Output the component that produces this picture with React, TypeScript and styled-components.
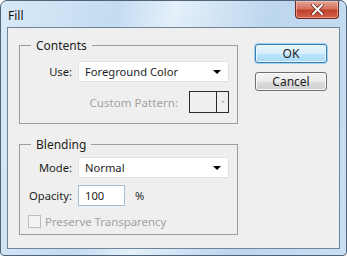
import React from 'react'
import styled, { createGlobalStyle } from 'styled-components'

const GlobalStyle = createGlobalStyle`
  html, body {
    margin: 0;
    padding: 0;
    background: #ffffff;
  }
  body {
    font-family: 'Noto Sans', 'Open Sans', sans-serif;
    font-size: 11.2px;
    color: #1e1e1e;
  }
`

const Window = styled.div`
  box-sizing: border-box;
  width: 347px;
  height: 256px;
  display: flex;
  flex-direction: column;
  padding: 0 6px 6px 6px;
  border: 1px solid #4f6479;
  border-radius: 7px 7px 4px 4px;
  background: linear-gradient(100deg, #d8e9f7 0%, #c4dcf1 30%, #e4f0fa 45%, #bcd6ee 70%, #c9dff3 100%);
`

const TitleBar = styled.div`
  height: 26px;
  display: flex;
  align-items: flex-start;
  justify-content: space-between;
`

const Title = styled.span`
  padding: 6px 0 0 1px;
  font-size: 12px;
  color: #111;
`

const CloseButton = styled.div`
  width: 42px;
  height: 17px;
  margin-right: 1px;
  display: flex;
  align-items: center;
  justify-content: center;
  border: 1px solid #6e2a22;
  border-top: none;
  border-radius: 0 0 4px 4px;
  background: linear-gradient(#e3a597 0%, #d5735f 45%, #c1412a 55%, #d2634a 100%);
  box-shadow: inset 0 0 0 1px rgba(255, 210, 200, 0.5);
`

const Client = styled.div`
  flex: 1;
  display: flex;
  gap: 17px;
  padding: 10px 12px 0 11px;
  border: 1px solid #6f8499;
  background: #efefef;
`

const Groups = styled.div`
  width: 219px;
  display: flex;
  flex-direction: column;
  gap: 13px;
`

const Group = styled.fieldset<{ $pad: string }>`
  margin: 0;
  padding: ${(p) => p.$pad};
  border: 1px solid #9d9d9d;
  display: flex;
  flex-direction: column;
`

const Legend = styled.legend`
  margin-left: 11px;
  padding: 0 5px;
  line-height: 15px;
  font-size: 12px;
`

const Row = styled.div<{ $mt?: number }>`
  display: grid;
  grid-template-columns: 52px 151px;
  column-gap: 6px;
  align-items: center;
  margin-top: ${(p) => p.$mt ?? 0}px;
`

const Label = styled.span`
  text-align: right;
  white-space: nowrap;
`

const Select = styled.div`
  box-sizing: border-box;
  height: 21px;
  display: flex;
  align-items: center;
  justify-content: space-between;
  padding: 0 7px 0 6px;
  background: #ffffff;
  border: 1px solid #e2e2e2;
`

const Arrow = styled.span<{ $color?: string; $size?: number }>`
  width: 0;
  height: 0;
  border-left: ${(p) => p.$size ?? 4}px solid transparent;
  border-right: ${(p) => p.$size ?? 4}px solid transparent;
  border-top: ${(p) => p.$size ?? 4}px solid ${(p) => p.$color ?? '#000'};
`

const PatternRow = styled.div`
  display: flex;
  justify-content: flex-end;
  align-items: center;
  gap: 11px;
  margin: 9px 8px 0 0;
  color: #a3a3a3;
  font-size: 11.6px;
`

const PatternBox = styled.div`
  box-sizing: border-box;
  width: 40px;
  height: 22px;
  display: flex;
  border: 1px solid #2b2b2b;
`

const Swatch = styled.div`
  flex: 1;
  border-right: 1px solid #2b2b2b;
`

const PatternArrow = styled.div`
  width: 11px;
  display: flex;
  align-items: center;
  justify-content: center;
`

const Input = styled.div`
  box-sizing: border-box;
  width: 47px;
  height: 21px;
  display: flex;
  align-items: center;
  padding-left: 6px;
  background: #ffffff;
  border: 1px solid #a7bdd3;
`

const InputRow = styled.div`
  display: flex;
  align-items: center;
  gap: 10px;
`

const CheckRow = styled.div`
  display: flex;
  align-items: center;
  gap: 4px;
  margin: 8px 0 0 8px;
  color: #a3a3a3;
  font-size: 11.4px;
`

const Checkbox = styled.span`
  box-sizing: border-box;
  width: 13px;
  height: 13px;
  border: 1px solid #bdbdbd;
  background: #f3f3f3;
`

const Buttons = styled.div`
  width: 72px;
  display: flex;
  flex-direction: column;
  gap: 9px;
  padding-top: 6px;
`

const Button = styled.button<{ $primary?: boolean }>`
  box-sizing: border-box;
  height: 19px;
  padding: 0;
  font-family: inherit;
  font-size: 12px;
  color: #1e1e1e;
  border-radius: 3px;
  border: 1px solid ${(p) => (p.$primary ? '#3d7bad' : '#707070')};
  background: ${(p) =>
    p.$primary
      ? 'linear-gradient(#e9f6fd 0%, #d6eefb 50%, #bee6fd 51%, #a7d9f5 100%)'
      : 'linear-gradient(#f2f2f2 0%, #ebebeb 50%, #dddddd 51%, #cfcfcf 100%)'};
  box-shadow: ${(p) => (p.$primary ? '0 0 0 1px #9fd3f3, inset 0 0 0 1px #e8f6fe' : 'inset 0 0 0 1px #fbfbfb')};
`

export default function App() {
  return (
    <>
      <GlobalStyle />
      <Window>
        <TitleBar>
          <Title>Fill</Title>
          <CloseButton>
            <svg width="13" height="11" viewBox="0 0 13 11">
              <path d="M2 1 L11 10 M11 1 L2 10" stroke="#5b1f16" strokeWidth="3.4" strokeLinecap="round" />
              <path d="M2 1 L11 10 M11 1 L2 10" stroke="#ffffff" strokeWidth="2" strokeLinecap="round" />
            </svg>
          </CloseButton>
        </TitleBar>
        <Client>
          <Groups>
            <Group $pad="8px 0 10px 0">
              <Legend>Contents</Legend>
              <Row>
                <Label>Use:</Label>
                <Select>
                  Foreground Color
                  <Arrow />
                </Select>
              </Row>
              <PatternRow>
                Custom Pattern:
                <PatternBox>
                  <Swatch />
                  <PatternArrow>
                    <Arrow $color="#b0b0b0" $size={2} />
                  </PatternArrow>
                </PatternBox>
              </PatternRow>
            </Group>
            <Group $pad="5px 0 5px 0">
              <Legend>Blending</Legend>
              <Row>
                <Label>Mode:</Label>
                <Select>
                  Normal
                  <Arrow />
                </Select>
              </Row>
              <Row $mt={7}>
                <Label>Opacity:</Label>
                <InputRow>
                  <Input>100</Input>%
                </InputRow>
              </Row>
              <CheckRow>
                <Checkbox />
                Preserve Transparency
              </CheckRow>
            </Group>
          </Groups>
          <Buttons>
            <Button $primary>OK</Button>
            <Button>Cancel</Button>
          </Buttons>
        </Client>
      </Window>
    </>
  )
}
